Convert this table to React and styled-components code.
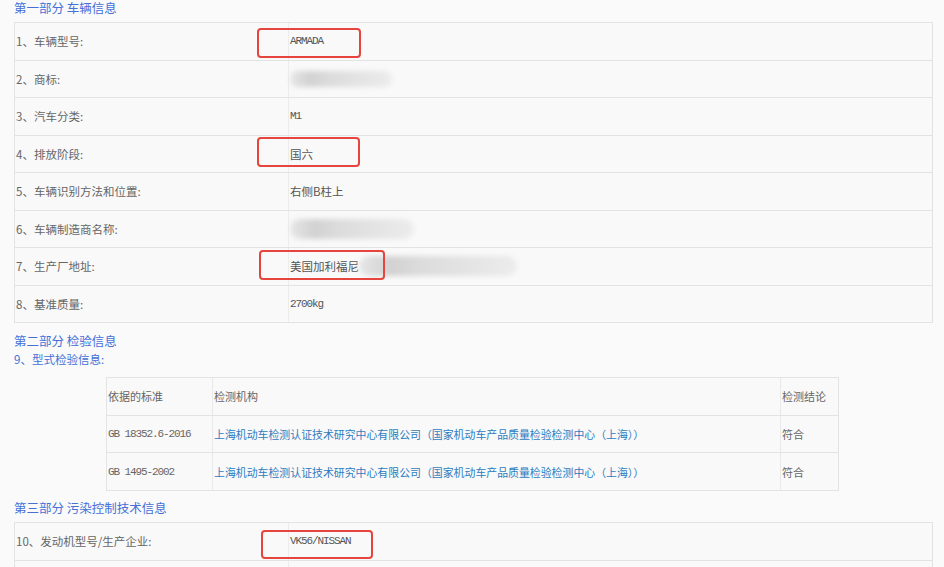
import styled, { createGlobalStyle } from "styled-components";

const GlobalStyle = createGlobalStyle`
  html, body {
    margin: 0;
    padding: 0;
    background: #fafafa;
    overflow: hidden;
  }
  body {
    font-family: "Noto Sans CJK SC", "Noto Sans", sans-serif;
    color: #555;
  }
`;

const vehicleRows = [
  { label: "1、车辆型号:", value: "ARMADA", mono: true, mark: { left: -32, top: 5, w: 104, h: 30 } },
  { label: "2、商标:", blur: { w: 102, h: 16 } },
  { label: "3、汽车分类:", value: "M1", mono: true },
  { label: "4、排放阶段:", value: "国六", mark: { left: -32, top: 1, w: 103, h: 30 } },
  { label: "5、车辆识别方法和位置:", value: "右侧B柱上" },
  { label: "6、车辆制造商名称:", blur: { w: 124, h: 20 } },
  { label: "7、生产厂地址:", value: "美国加利福尼", blur: { w: 158, h: 20, shift: 0 }, mark: { left: -30, top: 2, w: 126, h: 30 } },
  { label: "8、基准质量:", value: "2700kg", mono: true },
];

const checks = [
  { std: "GB 18352.6-2016", org: "上海机动车检测认证技术研究中心有限公司（国家机动车产品质量检验检测中心（上海））", result: "符合" },
  { std: "GB 1495-2002", org: "上海机动车检测认证技术研究中心有限公司（国家机动车产品质量检验检测中心（上海））", result: "符合" },
];

const App = () => {
  return (
    <>
      <GlobalStyle />
      <Page>
        <SectionTitle $top={0} $bottom={6}>第一部分 车辆信息</SectionTitle>
        <InfoTable>
          {vehicleRows.map((row) => (
            <InfoRow key={row.label}>
              <Label>{row.label}</Label>
              <Value $mono={row.mono}>
                {row.value}
                {row.blur && <Blur $w={row.blur.w} $h={row.blur.h} $shift={row.blur.shift || 0} />}
                {row.mark && (
                  <Mark $left={row.mark.left} $top={row.mark.top} $w={row.mark.w} $h={row.mark.h} />
                )}
              </Value>
            </InfoRow>
          ))}
        </InfoTable>

        <SectionTitle $top={10} $bottom={2}>第二部分 检验信息</SectionTitle>
        <SubTitle>9、型式检验信息:</SubTitle>
        <CheckTable>
          <CheckRow>
            <CheckCell>依据的标准</CheckCell>
            <CheckCell>检测机构</CheckCell>
            <CheckCell>检测结论</CheckCell>
          </CheckRow>
          {checks.map((c) => (
            <CheckRow key={c.std}>
              <CheckCell $mono>{c.std}</CheckCell>
              <CheckCell>
                <OrgLink href="#">{c.org}</OrgLink>
              </CheckCell>
              <CheckCell>{c.result}</CheckCell>
            </CheckRow>
          ))}
        </CheckTable>

        <SectionTitle $top={9} $bottom={6}>第三部分 污染控制技术信息</SectionTitle>
        <InfoTable>
          <InfoRow>
            <Label>10、发动机型号/生产企业:</Label>
            <Value $mono>
              VK56/NISSAN
              <Mark $left={-28} $top={7} $w={112} $h={29} />
            </Value>
          </InfoRow>
          <InfoRow>
            <Label />
            <Value />
          </InfoRow>
        </InfoTable>
      </Page>
    </>
  );
};

const Page = styled.div`
  padding: 0 11px 0 14px;
  display: flex;
  flex-direction: column;
  width: 919px;
`;

const SectionTitle = styled.div`
  margin-top: ${(p) => p.$top}px;
  margin-bottom: ${(p) => p.$bottom}px;
  font-size: 12.5px;
  line-height: 16px;
  color: #4470d8;
`;

const SubTitle = styled.div`
  font-size: 11.5px;
  line-height: 16px;
  color: #4470d8;
  margin-bottom: 10px;
`;

const InfoTable = styled.div`
  border: 1px solid #e3e3e3;
  border-bottom: none;
  background: #f9f9f9;
`;

const InfoRow = styled.div`
  display: grid;
  grid-template-columns: 274px 1fr;
  height: 37.5px;
  box-sizing: border-box;
  border-bottom: 1px solid #e3e3e3;
`;

const Label = styled.div`
  display: flex;
  align-items: center;
  padding-left: 1px;
  border-right: 1px solid #ececec;
  font-size: 11.5px;
  color: #666;
  white-space: nowrap;
`;

const Value = styled.div`
  position: relative;
  display: flex;
  align-items: center;
  padding-left: 1px;
  font-size: ${(p) => (p.$mono ? "11px" : "11.5px")};
  font-family: ${(p) =>
    p.$mono ? '"Liberation Mono", monospace' : '"Noto Sans CJK SC", sans-serif'};
  letter-spacing: ${(p) => (p.$mono ? "-1.1px" : "0")};
  color: #555;
  white-space: nowrap;
`;

const Blur = styled.span`
  display: inline-block;
  width: ${(p) => p.$w}px;
  height: ${(p) => p.$h}px;
  margin-left: ${(p) => p.$shift}px;
  border-radius: 10px;
  background: linear-gradient(90deg, #e6e6e6 0%, #d2d2d2 20%, #dcdcdc 40%, #e4e4e4 70%, #ececec 100%);
  filter: blur(2.5px);
`;

const Mark = styled.span`
  position: absolute;
  left: ${(p) => p.$left}px;
  top: ${(p) => p.$top}px;
  width: ${(p) => p.$w}px;
  height: ${(p) => p.$h}px;
  box-sizing: border-box;
  border: 2px solid #e5453c;
  border-radius: 4px;
  pointer-events: none;
`;

const CheckTable = styled.div`
  margin-left: 92px;
  width: 733px;
  box-sizing: border-box;
  border: 1px solid #e3e3e3;
  border-bottom: none;
  background: #f9f9f9;
`;

const CheckRow = styled.div`
  display: grid;
  grid-template-columns: 106px 568px 1fr;
  height: 37.7px;
  box-sizing: border-box;
  border-bottom: 1px solid #e3e3e3;
`;

const CheckCell = styled.div`
  display: flex;
  align-items: center;
  padding-left: 1px;
  border-right: 1px solid #e9e9e9;
  font-size: 11px;
  font-family: ${(p) =>
    p.$mono ? '"Liberation Mono", monospace' : '"Noto Sans CJK SC", sans-serif'};
  letter-spacing: ${(p) => (p.$mono ? "-1.1px" : "0")};
  color: #666;
  white-space: nowrap;
  &:last-child {
    border-right: none;
  }
`;

const OrgLink = styled.a`
  color: #2d7cc0;
  text-decoration: none;
  font-size: 10.9px;
`;

export default App;
